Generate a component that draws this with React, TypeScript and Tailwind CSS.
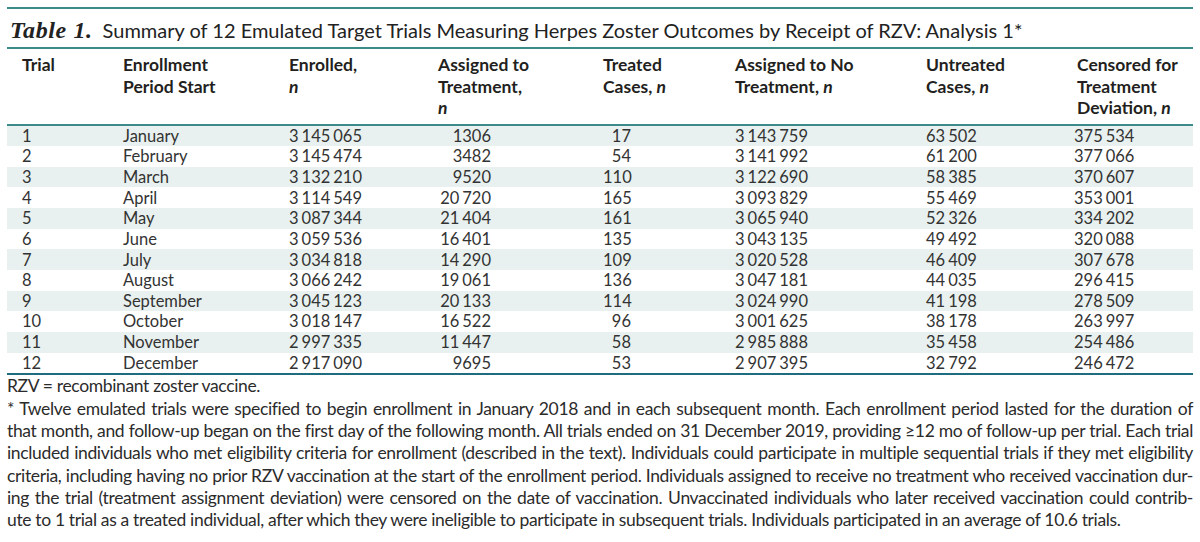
const rows = [
  ["1", "January", "3 145 065", "1306", "17", "3 143 759", "63 502", "375 534"],
  ["2", "February", "3 145 474", "3482", "54", "3 141 992", "61 200", "377 066"],
  ["3", "March", "3 132 210", "9520", "110", "3 122 690", "58 385", "370 607"],
  ["4", "April", "3 114 549", "20 720", "165", "3 093 829", "55 469", "353 001"],
  ["5", "May", "3 087 344", "21 404", "161", "3 065 940", "52 326", "334 202"],
  ["6", "June", "3 059 536", "16 401", "135", "3 043 135", "49 492", "320 088"],
  ["7", "July", "3 034 818", "14 290", "109", "3 020 528", "46 409", "307 678"],
  ["8", "August", "3 066 242", "19 061", "136", "3 047 181", "44 035", "296 415"],
  ["9", "September", "3 045 123", "20 133", "114", "3 024 990", "41 198", "278 509"],
  ["10", "October", "3 018 147", "16 522", "96", "3 001 625", "38 178", "263 997"],
  ["11", "November", "2 997 335", "11 447", "58", "2 985 888", "35 458", "254 486"],
  ["12", "December", "2 917 090", "9695", "53", "2 907 395", "32 792", "246 472"],
];

const notes = [
  "* Twelve emulated trials were specified to begin enrollment in January 2018 and in each subsequent month. Each enrollment period lasted for the duration of",
  "that month, and follow-up began on the first day of the following month. All trials ended on 31 December 2019, providing ≥12 mo of follow-up per trial. Each trial",
  "included individuals who met eligibility criteria for enrollment (described in the text). Individuals could participate in multiple sequential trials if they met eligibility",
  "criteria, including having no prior RZV vaccination at the start of the enrollment period. Individuals assigned to receive no treatment who received vaccination dur-",
  "ing the trial (treatment assignment deviation) were censored on the date of vaccination. Unvaccinated individuals who later received vaccination could contrib-",
];

// digit groups with a thin gap between them
function Num({ v }: { v: string }) {
  const parts = v.split(" ");
  return (
    <span className="whitespace-nowrap">
      {parts.map((p, i) => (
        <span key={i} className={i > 0 ? "ml-[3px]" : ""}>{p}</span>
      ))}
    </span>
  );
}

const cols = "grid grid-cols-[101px_166px_149px_165px_132px_191px_151px_1fr] pl-[15px]";

export default function App() {
  return (
    <div className="bg-white px-[7px] pt-[7px] font-['Lato',sans-serif] text-[#2a2a2a]">
      <div className="border-t-2 border-[#3b8c88] pt-[7px] pb-[3px] pl-[3px] leading-[28px] text-[20px] text-[#222]">
        <span className="font-['Liberation_Serif',serif] italic font-bold text-[24px] tracking-[0.6px] mr-[10px]">Table 1.</span>
        Summary of 12 Emulated Target Trials Measuring Herpes Zoster Outcomes by Receipt of RZV: Analysis 1*
      </div>

      <div className={`${cols} border-t-2 border-b-2 border-[#3b8c88] pt-[5px] pb-[5px] font-bold text-[17.5px] leading-[21.5px] text-[#231f20]`}>
        <div>Trial</div>
        <div>Enrollment<br />Period Start</div>
        <div>Enrolled,<br /><i>n</i></div>
        <div>Assigned to<br />Treatment,<br /><i>n</i></div>
        <div>Treated<br />Cases, <i>n</i></div>
        <div>Assigned to No<br />Treatment, <i>n</i></div>
        <div>Untreated<br />Cases, <i>n</i></div>
        <div>Censored for<br />Treatment<br />Deviation, <i>n</i></div>
      </div>

      <div className="border-b-2 border-[#1f6b80] text-[16.5px] text-[#333]">
        {rows.map((r, i) => (
          <div key={r[0]} className={`${cols} h-[20.67px] items-center leading-none ${i % 2 === 0 ? "bg-[#e8f1ef]" : "bg-white"}`}>
            <div>{r[0]}</div>
            <div>{r[1]}</div>
            <div><Num v={r[2]} /></div>
            <div className="w-[53px] text-right"><Num v={r[3]} /></div>
            <div className="w-[28px] text-right">{r[4]}</div>
            <div><Num v={r[5]} /></div>
            <div><Num v={r[6]} /></div>
            <div className="-ml-[3px]"><Num v={r[7]} /></div>
          </div>
        ))}
      </div>

      <div className="text-[17.5px] leading-[22.3px] text-[#2b2b2b] tracking-[-0.35px]">
        <div>RZV = recombinant zoster vaccine.</div>
        {notes.map((l) => (
          <div key={l} className="whitespace-nowrap text-justify [text-align-last:justify]">{l}</div>
        ))}
        <div className="whitespace-nowrap">
          ute to 1 trial as a treated individual, after which they were ineligible to participate in subsequent trials. Individuals participated in an average of 10.6 trials.
        </div>
      </div>
    </div>
  );
}
